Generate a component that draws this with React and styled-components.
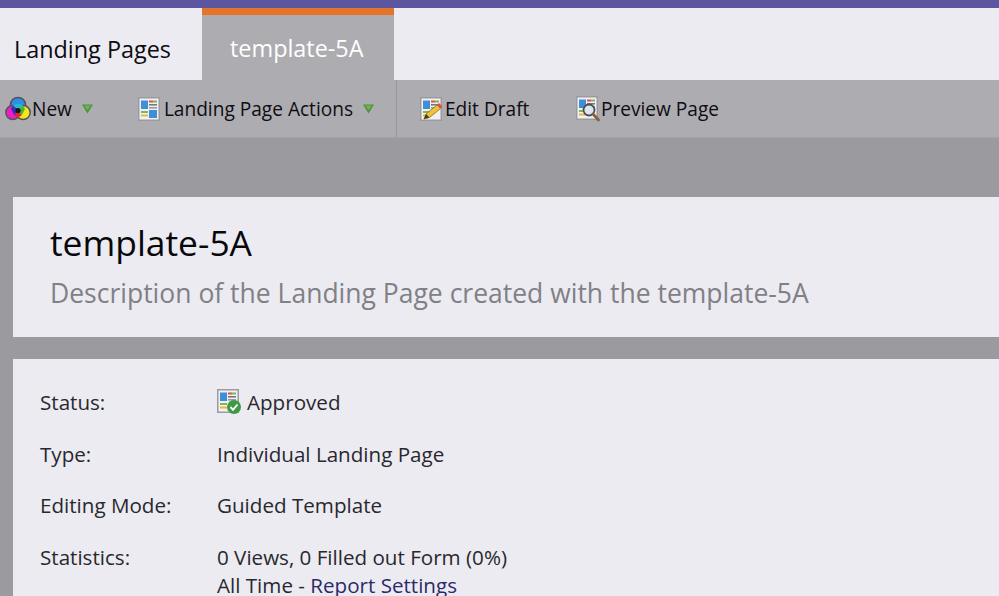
import React from 'react'
import styled, { createGlobalStyle } from 'styled-components'

const GlobalStyle = createGlobalStyle`
  html, body {
    margin: 0;
    height: 100%;
    overflow: hidden;
    background: #9b9a9f;
    font-family: 'Open Sans', 'Liberation Sans', sans-serif;
  }
`

const Page = styled.div`
  width: 999px;
  height: 596px;
  overflow: hidden;
  display: flex;
  flex-direction: column;
  background: #9b9a9f;
`

const TopBar = styled.div`
  height: 8px;
  background: #5c55a0;
  flex: none;
`

const TabRow = styled.div`
  height: 72px;
  flex: none;
  display: flex;
  background: #ecebf2;
`

const Tab = styled.div`
  box-sizing: border-box;
  width: ${props => props.width}px;
  padding-left: ${props => props.$inset}px;
  padding-top: ${props => (props.$active ? 1 : 10)}px;
  display: flex;
  align-items: center;
  font-size: 23.4px;
  color: ${props => (props.$active ? '#ffffff' : '#0c0c10')};
  background: ${props => (props.$active ? '#adacb1' : 'transparent')};
  border-top: ${props => (props.$active ? '7px solid #e5732a' : 'none')};
`

const Toolbar = styled.div`
  height: 58px;
  flex: none;
  box-sizing: border-box;
  display: flex;
  align-items: center;
  background: #adacb1;
  border-bottom: 1px solid #a3a2a7;
`

const ToolGroup = styled.div`
  display: flex;
  align-items: center;
  height: 100%;
  width: ${props => props.width}px;
  box-sizing: border-box;
  border-right: ${props => (props.$divider ? '1px solid #97969b' : 'none')};
`

const ToolButton = styled.div`
  display: flex;
  align-items: center;
  gap: ${props => props.$gap || 0}px;
  margin-left: ${props => props.$offset}px;
  font-size: 19.1px;
  color: #0d0d12;
  white-space: nowrap;
`

const Caret = styled.span`
  display: flex;
  margin-left: ${props => props.$offset}px;
  margin-top: 1px;
`

const Content = styled.div`
  flex: 1;
  padding: 59px 0 0 13px;
  display: flex;
  flex-direction: column;
  gap: 22px;
`

const Card = styled.div`
  background: #ecebf2;
  box-sizing: border-box;
`

const HeaderCard = styled(Card)`
  height: 140px;
  padding: 21px 0 0 37px;
`

const Title = styled.h1`
  margin: 0;
  font-size: 35.4px;
  font-weight: 400;
  line-height: 48px;
  color: #08080c;
`

const Description = styled.p`
  margin: 8px 0 0;
  font-size: 26.5px;
  line-height: 38px;
  color: #808085;
`

const DetailsCard = styled(Card)`
  flex: 1;
  padding: 29px 0 0 27px;
  display: grid;
  grid-template-columns: 177px 1fr;
  grid-auto-rows: 51.5px;
  font-size: 20.6px;
  line-height: 28.5px;
  color: #28282d;
`

const Value = styled.div`
  display: flex;
  align-items: flex-start;
  flex-wrap: wrap;
`

const StatusIcon = styled.span`
  display: flex;
  margin-right: 5px;
  margin-top: 1px;
`

const ReportLink = styled.a`
  color: #2c2a66;
  text-decoration: none;
`

const DropCaret = () => (
  <svg width="11" height="10" viewBox="0 0 11 10">
    <path d="M0 0.5 H11 L5.5 9.5 Z" fill="#4e9238" />
    <path d="M2 1.5 H9 L5.5 6 Z" fill="#6fb356" />
  </svg>
)

const ColorsIcon = () => (
  <svg width="26" height="26" viewBox="0 0 26 26">
    <circle cx="13" cy="9" r="7.6" fill="#2f8ee6" stroke="#55545a" strokeWidth="1.5" />
    <circle cx="7.8" cy="16.6" r="7" fill="#ee1fc0" stroke="#55545a" strokeWidth="1.5" />
    <circle cx="18.2" cy="16.6" r="7" fill="#f4e51e" stroke="#55545a" strokeWidth="1.5" />
    <path d="M7.8 9.8 A7.6 7.6 0 0 1 18.2 9.8 L13 13.5Z" fill="#25b8d0" />
    <path d="M13 13.5 L18.2 9.8 L20 13 L16.5 19.5Z" fill="#42b53a" />
    <path d="M13 13.5 L7.8 9.8 L6 13 L9.5 19.5Z" fill="#3a2fb8" />
    <path d="M9.5 19.5 L13 13.5 L16.5 19.5 L13 21.5Z" fill="#e2262a" />
    <circle cx="13" cy="14.5" r="2.6" fill="#141414" />
  </svg>
)

// Shared page thumbnail behind the landing page icons
const PageBase = () => (
  <>
    <rect x="0.75" y="0.75" width="20.5" height="22.5" fill="#f1f1f4" stroke="#9a9aa0" strokeWidth="1.5" />
    <rect x="3" y="3.5" width="7" height="8.5" fill="#3f8fd8" />
    <rect x="11" y="3.5" width="4" height="2" fill="#d9534a" />
    <rect x="15" y="3.5" width="4" height="2" fill="#7fb64f" />
    <rect x="11" y="7" width="8" height="1.6" fill="#77777c" />
    <rect x="11" y="10" width="8" height="1.6" fill="#99999e" />
    <rect x="3" y="14" width="7" height="2" fill="#7db850" />
    <rect x="3" y="17.5" width="7" height="2" fill="#e8b93f" />
  </>
)

const PageIcon = () => (
  <svg width="22" height="24" viewBox="0 0 22 24">
    <PageBase />
    <rect x="11" y="13" width="8" height="8" fill="#3f8fd8" />
  </svg>
)

const EditIcon = () => (
  <svg width="24" height="24" viewBox="0 0 24 24">
    <PageBase />
    <path d="M4 22 L6 17 L17 8 L20.5 11.5 L9.5 20.5 Z" fill="#eec23a" stroke="#8f6d1c" strokeWidth="0.8" />
    <path d="M17 8 L19 6 L22.5 9.5 L20.5 11.5 Z" fill="#d9534a" />
    <path d="M4 22 L6 17 L9.5 20.5 Z" fill="#4a3a1c" />
  </svg>
)

const PreviewIcon = () => (
  <svg width="24" height="26" viewBox="0 0 24 26">
    <PageBase />
    <circle cx="13" cy="14" r="5.5" fill="#dfe6ee" stroke="#4d4d52" strokeWidth="1.8" />
    <path d="M17 18 L22.5 24" stroke="#87603a" strokeWidth="2.8" strokeLinecap="round" />
  </svg>
)

const ApprovedIcon = () => (
  <svg width="25" height="26" viewBox="0 0 25 26">
    <PageBase />
    <circle cx="17" cy="18" r="7" fill="#3f9a45" />
    <path d="M13.5 18 L16 20.8 L20.5 15.5" fill="none" stroke="#ffffff" strokeWidth="1.9" />
  </svg>
)

const App = () => (
  <>
    <GlobalStyle />
    <Page>
      <TopBar />
      <TabRow>
        <Tab width={202} $inset={14}>Landing Pages</Tab>
        <Tab width={192} $inset={28} $active>template-5A</Tab>
      </TabRow>
      <Toolbar>
        <ToolGroup width={397} $divider>
          <ToolButton $offset={5} $gap={1}>
            <ColorsIcon />New
          </ToolButton>
          <Caret $offset={10}><DropCaret /></Caret>
          <ToolButton $offset={45} $gap={4}>
            <PageIcon />Landing Page Actions
          </ToolButton>
          <Caret $offset={10}><DropCaret /></Caret>
        </ToolGroup>
        <ToolGroup width={178}>
          <ToolButton $offset={23} $gap={1}>
            <EditIcon />Edit Draft
          </ToolButton>
        </ToolGroup>
        <ToolGroup width={200}>
          <ToolButton $offset={1} $gap={1}>
            <PreviewIcon />Preview Page
          </ToolButton>
        </ToolGroup>
      </Toolbar>
      <Content>
        <HeaderCard>
          <Title>template-5A</Title>
          <Description>Description of the Landing Page created with the template-5A</Description>
        </HeaderCard>
        <DetailsCard>
          <div>Status:</div>
          <Value>
            <StatusIcon><ApprovedIcon /></StatusIcon>Approved
          </Value>
          <div>Type:</div>
          <Value>Individual Landing Page</Value>
          <div>Editing Mode:</div>
          <Value>Guided Template</Value>
          <div>Statistics:</div>
          <div>
            <div>0 Views, 0 Filled out Form (0%)</div>
            <div>All Time - <ReportLink>Report Settings</ReportLink></div>
          </div>
        </DetailsCard>
      </Content>
    </Page>
  </>
)

export default App
